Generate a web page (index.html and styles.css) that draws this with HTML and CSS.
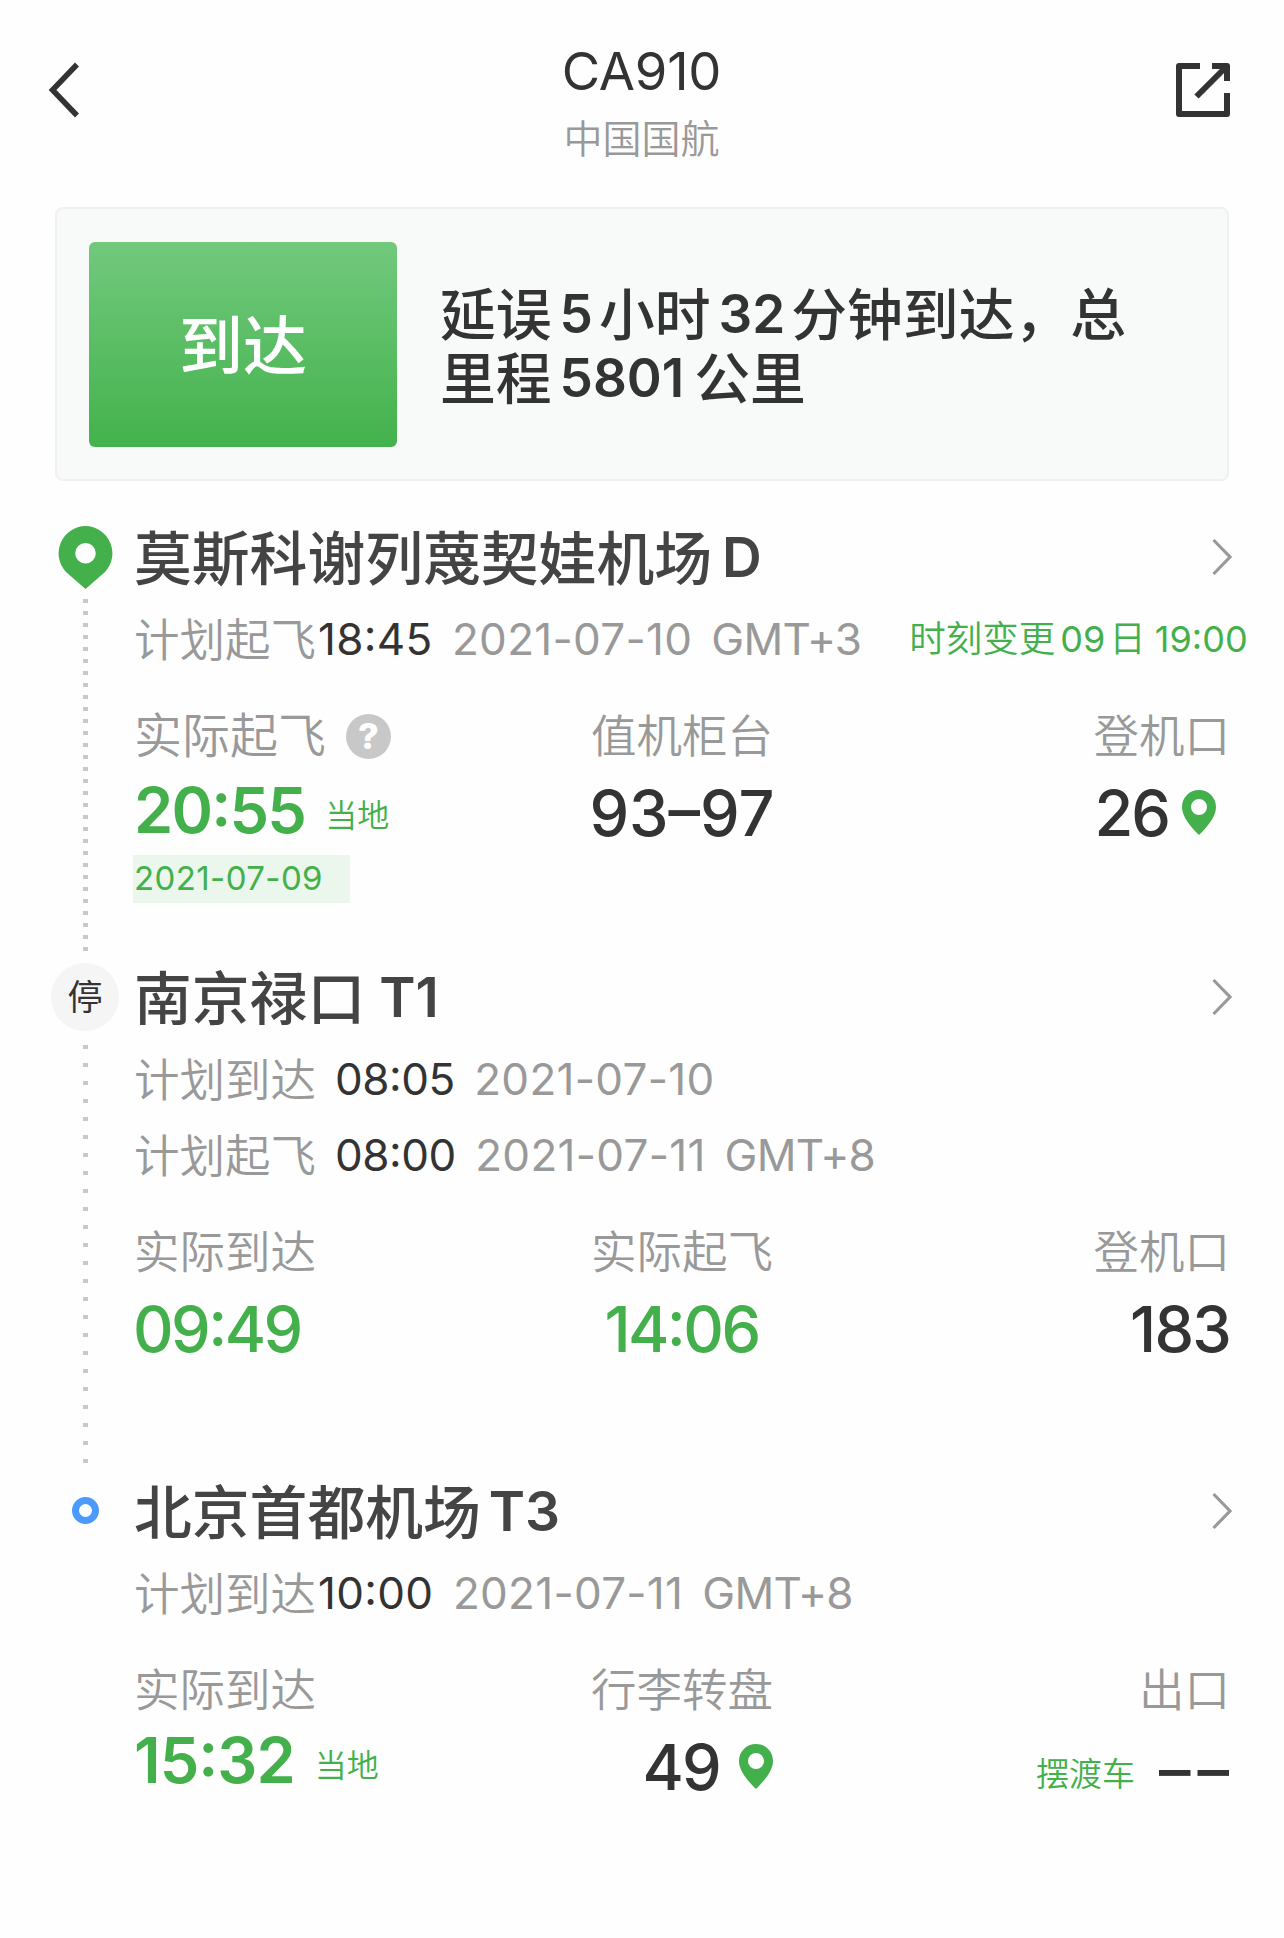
FILE: index.html
```html
<!DOCTYPE html>
<html lang="zh-CN">

<head>
    <meta charset="UTF-8">
    <meta name="viewport" content="width=device-width, initial-scale=1.0">
    <title>CA910 中国国航</title>
    <link rel="stylesheet" href="styles.css">
</head>

<body>

    <header class="header">
        <svg class="back" viewBox="0 0 32 56" fill="none" stroke="#333" stroke-width="5.5">
            <path d="M29 2.500 L4.500 28 L29 53.500" />
        </svg>
        <div class="header-text">
            <h1 class="flight-no">CA910</h1>
            <div class="airline">中国国航</div>
        </div>
        <svg class="share" viewBox="0 0 54 54" fill="none" stroke="#333" stroke-width="6">
            <path d="M24 3 H3 V51 H51 V30" stroke-linejoin="round" />
            <path d="M36 3 H51 V18" stroke-linejoin="round" />
            <path d="M50 4 L20.500 33.500" />
        </svg>
    </header>

    <section class="status-card">
        <div class="status">到达</div>
        <p class="summary">延误<span class="n">5</span>小时<span class="n">32</span>分钟到达，总<br>里程<span class="n km">5801</span>公里</p>
    </section>

    <main class="route">

        <section class="station first">
            <div class="rail">
                <svg class="pin-big" viewBox="0 0 55 63">
                    <path fill="#43b04b" fill-rule="evenodd" d="M27.500 0 A27.300 27.300 0 0 1 47 46 L27.500 63 L8 46 A27.300 27.300 0 0 1 27.500 0 Z M27.500 17 A10.300 10.300 0 1 0 27.500 37.600 A10.300 10.300 0 1 0 27.500 17 Z" />
                </svg>
                <div class="dots dense"></div>
            </div>
            <div class="info">
                <div class="name-row">
                    <h2 class="name">莫斯科谢列蔑契娃机场<span class="n d">D</span></h2>
                    <svg class="arrow" viewBox="0 0 22 38"><path d="M2.500 2 L19 19 L2.500 36" /></svg>
                </div>
                <div class="plan">计划起飞<span class="time tight">18:45</span><span class="date">2021-07-10</span><span class="gmt">GMT+3</span><span class="changed">时刻变更<span class="n">09</span>日<span class="n at">19:00</span></span></div>
                <div class="cols">
                    <div class="col">
                        <div class="label large">实际起飞<span class="help">?</span></div>
                        <div class="value green bold">20:55<span class="local">当地</span></div>
                        <div class="day">2021-07-09</div>
                    </div>
                    <div class="col center">
                        <div class="label">值机柜台</div>
                        <div class="value">93–97</div>
                    </div>
                    <div class="col right">
                        <div class="label">登机口</div>
                        <div class="value gate">26<svg class="pin" viewBox="0 0 34 45"><path fill="#43b04b" fill-rule="evenodd" d="M17 0 C26.500 0 34 7.500 34 17 C34 27 25 37 17 45 C9 37 0 27 0 17 C0 7.500 7.500 0 17 0 Z M17 9 A8 8 0 1 0 17 25 A8 8 0 1 0 17 9 Z" /></svg></div>
                    </div>
                </div>
            </div>
        </section>

        <section class="station second">
            <div class="rail">
                <div class="stop">停</div>
                <div class="dots sparse"></div>
            </div>
            <div class="info">
                <div class="name-row">
                    <h2 class="name">南京禄口<span class="n wide">T1</span></h2>
                    <svg class="arrow" viewBox="0 0 22 38"><path d="M2.500 2 L19 19 L2.500 36" /></svg>
                </div>
                <div class="plan">计划到达<span class="time">08:05</span><span class="date">2021-07-10</span></div>
                <div class="plan">计划起飞<span class="time">08:00</span><span class="date">2021-07-11</span><span class="gmt">GMT+8</span></div>
                <div class="cols">
                    <div class="col">
                        <div class="label">实际到达</div>
                        <div class="value green clock">09:49</div>
                    </div>
                    <div class="col center">
                        <div class="label">实际起飞</div>
                        <div class="value green clock">14:06</div>
                    </div>
                    <div class="col right">
                        <div class="label">登机口</div>
                        <div class="value gate-no">183</div>
                    </div>
                </div>
            </div>
        </section>

        <section class="station third">
            <div class="rail">
                <div class="ring"></div>
            </div>
            <div class="info">
                <div class="name-row">
                    <h2 class="name">北京首都机场<span class="n">T3</span></h2>
                    <svg class="arrow" viewBox="0 0 22 38"><path d="M2.500 2 L19 19 L2.500 36" /></svg>
                </div>
                <div class="plan">计划到达<span class="time tight">10:00</span><span class="date">2021-07-11</span><span class="gmt">GMT+8</span></div>
                <div class="cols">
                    <div class="col">
                        <div class="label">实际到达</div>
                        <div class="value green bold">15:32<span class="local">当地</span></div>
                    </div>
                    <div class="col center">
                        <div class="label">行李转盘</div>
                        <div class="value belt">49<svg class="pin" viewBox="0 0 34 45"><path fill="#43b04b" fill-rule="evenodd" d="M17 0 C26.500 0 34 7.500 34 17 C34 27 25 37 17 45 C9 37 0 27 0 17 C0 7.500 7.500 0 17 0 Z M17 9 A8 8 0 1 0 17 25 A8 8 0 1 0 17 9 Z" /></svg></div>
                    </div>
                    <div class="col right">
                        <div class="label">出口</div>
                        <div class="value"><span class="shuttle">摆渡车</span><span class="none">––</span></div>
                    </div>
                </div>
            </div>
        </section>

    </main>

</body>

</html>
```
FILE: styles.css
```css
* {
    box-sizing: border-box;
}

body {
    margin: 0;
    background: #fefefe;
    color: #333;
    font-family: Inter, "Noto Sans CJK SC", sans-serif;
}

h1, h2, p {
    margin: 0;
    font-weight: 400;
}

svg {
    display: block;
    flex-shrink: 0;
}

.header {
    display: flex;
    justify-content: space-between;
    height: 207px;
    padding: 0 54px 0 48px;
}

.back {
    width: 32px;
    height: 56px;
    margin-top: 62px;
}

.share {
    width: 54px;
    height: 54px;
    margin-top: 63px;
}

.header-text {
    padding-top: 40px;
    padding-left: 27px;
    text-align: center;
}

.flight-no {
    font-size: 52.500px;
    line-height: 62px;
    letter-spacing: -0.200px;
}

.airline {
    margin-top: 9px;
    font-size: 39px;
    line-height: 56px;
    color: #999;
    font-weight: 350;
}

.status-card {
    display: flex;
    align-items: center;
    width: 1174px;
    height: 274px;
    margin-left: 55px;
    padding-left: 32px;
    border: 2px solid #eff0f0;
    border-radius: 8px;
    background: #f8faf9;
}

.status {
    width: 308px;
    height: 205px;
    border-radius: 6px;
    background: linear-gradient(#72c97d, #43b24c);
    color: #fff;
    font-size: 64px;
    font-weight: 500;
    line-height: 208px;
    text-align: center;
}

.summary {
    padding-top: 6px;
    margin-left: 43px;
    font-size: 55.800px;
    font-weight: 500;
    line-height: 64px;
    white-space: nowrap;
}

.summary .n {
    margin: 0 6px 0 8px;
    font-size: 53px;
    font-weight: 600;
    line-height: 1;
    vertical-align: 2px;
}

.summary .km {
    margin-right: 10px;
}

.route {
    padding: 42px 53px 0 51px;
}

.station {
    display: flex;
    height: 440px;
}

.station.second {
    height: 514px;
}

.station.third {
    height: 340px;
}

.rail {
    display: flex;
    flex-direction: column;
    align-items: center;
    width: 69px;
    margin-right: 14px;
}

.pin-big {
    width: 55px;
    height: 63px;
    margin-top: 3px;
}

.dots {
    width: 5px;
}

.dense {
    height: 352px;
    margin-top: 10px;
    background: repeating-linear-gradient(#c8c8c8 0 4px, transparent 4px 12px);
}

.sparse {
    height: 418px;
    margin-top: 14px;
    background: repeating-linear-gradient(#c8c8c8 0 4px, transparent 4px 18px);
}

.stop {
    width: 68px;
    height: 68px;
    margin-right: 1px;
    border-radius: 50%;
    background: #f5f5f5;
    font-size: 35px;
    line-height: 68px;
    text-align: center;
}

.ring {
    width: 27px;
    height: 27px;
    margin-top: 20px;
    border: 7px solid #4c9afe;
    border-radius: 50%;
}

.info {
    width: 1096px;
}

.name-row {
    display: flex;
    justify-content: space-between;
    align-items: center;
    height: 68px;
}

.name {
    padding-top: 3px;
    font-size: 57.800px;
    font-weight: 500;
    line-height: 64px;
    color: #444;
}

.name .n {
    margin-left: 8px;
    font-size: 55px;
    font-weight: 600;
    line-height: 1;
    vertical-align: 3px;
}

.name .d {
    margin-left: 10px;
}

.name .wide {
    margin-left: 14px;
}

.arrow {
    width: 22px;
    height: 38px;
    margin-right: -3px;
    fill: none;
    stroke: #999;
    stroke-width: 3.200;
}

.plan {
    height: 76px;
    font-size: 45.500px;
    font-weight: 350;
    line-height: 100px;
    color: #999;
    white-space: nowrap;
}

.time,
.date,
.gmt {
    font-size: 44px;
    font-weight: 400;
    line-height: 1;
    vertical-align: 2px;
}

/* keeps the colon raised between digits even with letter-spacing */
.time,
.changed .at,
.value {
    font-feature-settings: "calt" 1;
}

.time {
    margin-left: 19px;
    letter-spacing: -0.500px;
    color: #333;
}

.time.tight {
    margin-left: 2px;
    letter-spacing: 0.300px;
}

.date {
    margin-left: 19.500px;
    letter-spacing: 0.300px;
}

.gmt {
    margin-left: 19px;
    letter-spacing: -0.700px;
}

.changed {
    margin-left: 48px;
    font-size: 36.500px;
    line-height: 1;
    vertical-align: 5px;
    color: #43b04b;
}

.changed .n {
    margin: 0 4px 0 5px;
    font-size: 36px;
    font-weight: 400;
}

.changed .at {
    margin: 0 0 0 9px;
}

.cols {
    display: flex;
    justify-content: space-between;
    padding-top: 37px;
}

.col {
    width: 33.33%;
}

.center {
    text-align: center;
}

.right {
    text-align: right;
}

.label {
    height: 64px;
    font-size: 45.500px;
    font-weight: 350;
    line-height: 66px;
    color: #999;
}

.label.large {
    display: flex;
    align-items: center;
    font-size: 48px;
}

.help {
    width: 45px;
    height: 45px;
    margin-left: 20px;
    border-radius: 50%;
    background: #c8c8c8;
    color: #fff;
    font-size: 36px;
    font-weight: 800;
    line-height: 45px;
    text-align: center;
}

.value {
    height: 87px;
    font-size: 63px;
    font-weight: 500;
    line-height: 90px;
    white-space: nowrap;
}

.green {
    color: #43b04b;
}

.clock {
    margin-left: -1px;
    letter-spacing: -2.600px;
}

.gate-no {
    letter-spacing: -1.800px;
}

.bold {
    font-weight: 600;
    line-height: 84px;
    letter-spacing: -1.800px;
}

.third .bold {
    line-height: 76px;
    letter-spacing: -1px;
}

.local {
    margin-left: 20px;
    font-size: 32px;
    font-weight: 350;
    line-height: 1;
    letter-spacing: 0;
    vertical-align: 6px;
}

.day {
    width: 217px;
    height: 48px;
    margin-left: -1px;
    padding-left: 1px;
    background: #ebf6ec;
    color: #43b04b;
    font-size: 33px;
    line-height: 46px;
    letter-spacing: 0.400px;
}

.gate,
.belt {
    display: flex;
    align-items: center;
    justify-content: flex-end;
    height: 90px;
    letter-spacing: -2px;
}

.gate {
    padding-right: 14px;
}

.belt {
    padding-right: 92px;
}

.pin {
    width: 34px;
    height: 45px;
    margin: -2px 0 0 13px;
}

.belt .pin {
    margin-left: 19px;
}

.shuttle {
    margin-right: 24px;
    color: #43b04b;
    font-size: 33px;
    font-weight: 350;
    line-height: 1;
    vertical-align: 4px;
}

.none {
    margin-right: -6px;
    line-height: 1;
    letter-spacing: 7px;
    vertical-align: -2px;
}
```
